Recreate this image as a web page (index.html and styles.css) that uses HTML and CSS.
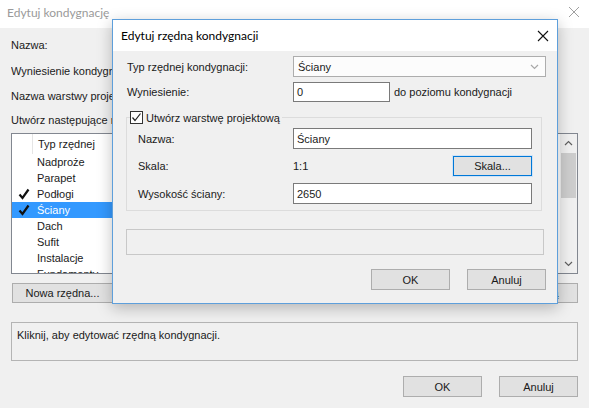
FILE: index.html
```html
<!DOCTYPE html>
<html lang="pl">
<head>
<meta charset="utf-8">
<title>Edytuj kondygnację</title>
<link rel="stylesheet" href="styles.css">
</head>
<body>
<div class="win">
  <div class="titlebar">
    <span class="wtitle">Edytuj kondygnację</span>
    <svg class="wclose" width="12" height="12" viewBox="0 0 12 12"><path d="M1 1L11 11M11 1L1 11" stroke="#a0a0a0" stroke-width="1" fill="none"/></svg>
  </div>
  <div class="content">
    <div class="frow r1"><span class="flabel">Nazwa:</span></div>
    <div class="frow r2"><span class="flabel">Wyniesienie kondygnacji:</span></div>
    <div class="frow r3"><span class="flabel">Nazwa warstwy projektowej:</span></div>
    <div class="frow r4"><span class="flabel">Utwórz następujące rzędne:</span></div>
    <div class="listbox">
      <div class="list">
        <div class="lhead"><span class="ccell"></span><span class="hcol">Typ rzędnej</span></div>
        <div class="item"><span class="ccell"></span><span class="itxt">Nadproże</span></div>
        <div class="item"><span class="ccell"></span><span class="itxt">Parapet</span></div>
        <div class="item"><span class="ccell"><svg width="12" height="12" viewBox="0 0 12 12"><path d="M1.5 6.5L4.5 10L10.5 1.5" stroke="#111" stroke-width="2.2" fill="none"/></svg></span><span class="itxt">Podłogi</span></div>
        <div class="item sel"><span class="ccell"><svg width="12" height="12" viewBox="0 0 12 12"><path d="M1.5 6.5L4.5 10L10.5 1.5" stroke="#111" stroke-width="2.2" fill="none"/></svg></span><span class="itxt">Ściany</span></div>
        <div class="item"><span class="ccell"></span><span class="itxt">Dach</span></div>
        <div class="item"><span class="ccell"></span><span class="itxt">Sufit</span></div>
        <div class="item"><span class="ccell"></span><span class="itxt">Instalacje</span></div>
        <div class="item"><span class="ccell"></span><span class="itxt">Fundamenty</span></div>
      </div>
      <div class="vscroll">
        <svg class="sarrow" width="9" height="6" viewBox="0 0 9 6"><path d="M1 5L4.5 1.5L8 5" stroke="#606060" stroke-width="1.2" fill="none"/></svg>
        <div class="track"><div class="thumb"></div></div>
        <svg class="sarrow" width="9" height="6" viewBox="0 0 9 6"><path d="M1 1L4.5 4.5L8 1" stroke="#606060" stroke-width="1.2" fill="none"/></svg>
      </div>
    </div>
    <div class="btnrow">
      <button class="btn wide">Nowa rzędna...</button>
      <button class="btn wide">Usuń rzędną</button>
    </div>
    <div class="desc">Kliknij, aby edytować rzędną kondygnacji.</div>
    <div class="footer">
      <button class="btn">OK</button>
      <button class="btn">Anuluj</button>
    </div>
  </div>

  <div class="dialog">
    <div class="dtitlebar">
      <span class="dtitle">Edytuj rzędną kondygnacji</span>
      <svg class="dclose" width="12" height="12" viewBox="0 0 12 12"><path d="M1 1L11 11M11 1L1 11" stroke="#111" stroke-width="1.1" fill="none"/></svg>
    </div>
    <div class="dbody">
      <div class="drow first">
        <span class="dlabel">Typ rzędnej kondygnacji:</span>
        <div class="combo"><span>Ściany</span><svg width="9" height="6" viewBox="0 0 9 6"><path d="M1 1L4.5 4.5L8 1" stroke="#a8a8a8" stroke-width="1.2" fill="none"/></svg></div>
      </div>
      <div class="drow second">
        <span class="dlabel">Wyniesienie:</span>
        <div class="tinput short">0</div>
        <span class="after">do poziomu kondygnacji</span>
      </div>
      <fieldset class="group">
        <legend class="glegend"><span class="cbox"><svg width="11" height="11" viewBox="0 0 11 11"><path d="M1.5 5.5L4 8.5L9.5 1.5" stroke="#222" stroke-width="1.2" fill="none"/></svg></span>Utwórz warstwę projektową</legend>
        <div class="grow">
          <span class="glabel">Nazwa:</span>
          <div class="tinput long">Ściany</div>
        </div>
        <div class="grow mid">
          <span class="glabel">Skala:</span>
          <span class="scale">1:1</span>
          <button class="btn focus">Skala...</button>
        </div>
        <div class="grow last">
          <span class="glabel">Wysokość ściany:</span>
          <div class="tinput long">2650</div>
        </div>
      </fieldset>
      <div class="status"></div>
      <div class="dfooter">
        <button class="btn">OK</button>
        <button class="btn">Anuluj</button>
      </div>
    </div>
  </div>
</div>
</body>
</html>
```
FILE: styles.css
```css
* { box-sizing: border-box; }
html, body { margin: 0; padding: 0; }
body {
  width: 589px;
  height: 408px;
  overflow: hidden;
  background: #f0f0f0;
  font-family: "Liberation Sans", Arial, sans-serif;
  font-size: 11px;
  color: #1a1a1a;
}
.win { position: relative; width: 589px; height: 408px; }

.titlebar {
  height: 28px;
  background: #fff;
  display: flex;
  align-items: center;
  justify-content: space-between;
  padding: 0 9px 4px 7px;
}
.wtitle {
  font-family: Lato, "Liberation Sans", sans-serif;
  font-size: 12px;
  color: #9a9a9a;
}

.content { padding: 4px 11px 0 11px; }
.frow { display: flex; align-items: center; }
.flabel { width: 101px; overflow: hidden; white-space: nowrap; }
.r1, .r2 { height: 26px; }
.r3, .r4 { height: 24px; }

.listbox {
  margin-top: 1px;
  width: 567px;
  height: 141px;
  border: 1px solid #828790;
  background: #fff;
  display: flex;
  overflow: hidden;
}
.list { flex: 1; overflow: hidden; }
.lhead { height: 20px; display: flex; align-items: center; }
.lhead .ccell { height: 20px; border-right: 1px solid #e5e5e5; }
.hcol { padding-left: 5px; }
.ccell { width: 21px; display: flex; align-items: center; justify-content: center; flex: none; padding-left: 2px; }
.item { height: 16px; display: flex; align-items: center; width: 101px; }
.itxt { padding-left: 4px; white-space: nowrap; }
.item.sel { background: #3399ff; color: #fff; }

.vscroll {
  width: 17px;
  flex: none;
  background: #f0f0f0;
  display: flex;
  flex-direction: column;
  align-items: center;
  padding: 6px 0 6px;
}
.track { flex: 1; width: 100%; padding: 7px 1px 0; }
.thumb { height: 45px; background: #cdcdcd; }
.sarrow { flex: none; }

.btnrow {
  margin-top: 9px;
  display: flex;
  justify-content: space-between;
  width: 567px;
}
.btn {
  height: 20px;
  width: 79px;
  padding: 0;
  border: 1px solid #adadad;
  background: #e1e1e1;
  font-family: "Liberation Sans", Arial, sans-serif;
  font-size: 11px;
  color: #1a1a1a;
}
.btn.wide { width: 101px; margin-left: 1px; }

.desc {
  margin-top: 19px;
  width: 567px;
  height: 39px;
  border: 1px solid #b4b4b4;
  padding: 6px 5px;
}
.footer {
  margin-top: 15px;
  width: 567px;
  display: flex;
  justify-content: flex-end;
  gap: 17px;
}
.footer .btn { height: 21px; }

/* dialog */
.dialog {
  position: absolute;
  left: 112px;
  top: 19px;
  width: 446px;
  height: 285px;
  border: 1px solid #5e9fdb;
  background: #f0f0f0;
  box-shadow: 0 4px 14px rgba(0, 0, 0, 0.25);
}
.dtitlebar {
  height: 31px;
  background: #fff;
  display: flex;
  align-items: center;
  justify-content: space-between;
  padding: 0 8px 0 8px;
}
.dtitle {
  font-family: Lato, "Liberation Sans", sans-serif;
  font-size: 12px;
  color: #000;
}
.dbody { padding: 5px 11px 0 14px; }
.drow { display: flex; align-items: center; }
.dlabel { width: 166px; flex: none; }
.drow.second { margin-top: 5px; }
.combo {
  width: 253px;
  height: 21px;
  border: 1px solid #adadad;
  background: #fcfcfc;
  display: flex;
  align-items: center;
  justify-content: space-between;
  padding: 0 6px 0 4px;
}
.tinput {
  height: 20px;
  border: 1px solid #7a7a7a;
  background: #fff;
  display: flex;
  align-items: center;
  padding-left: 3px;
}
.tinput.short { width: 97px; }
.tinput.long { width: 239px; height: 21px; }
.after { margin-left: 4px; }

.group {
  margin: 9px 0 0 -1px;
  width: 416px;
  border: 1px solid #dcdcdc;
  padding: 4px 9px 6px 11px;
}
.glegend {
  display: flex;
  align-items: center;
  padding: 0 2px 0 0;
  margin-left: -8px;
}
.cbox {
  width: 13px;
  height: 13px;
  border: 1px solid #333;
  background: #fff;
  display: flex;
  align-items: center;
  justify-content: center;
  margin-right: 3px;
}
.grow { display: flex; align-items: center; }
.glabel { width: 155px; flex: none; }
.grow.mid { margin-top: 7px; height: 20px; }
.grow.last { margin-top: 7px; }
.scale { flex: 1; }
.btn.focus { border-color: #0078d7; box-shadow: 0 0 0 1px #cfe3f7; }

.status {
  margin: 18px 0 0 -1px;
  width: 418px;
  height: 26px;
  border: 1px solid #c8c8c8;
}
.dfooter {
  margin-top: 14px;
  display: flex;
  justify-content: flex-end;
  gap: 17px;
}
.dfooter .btn { height: 21px; }
```
